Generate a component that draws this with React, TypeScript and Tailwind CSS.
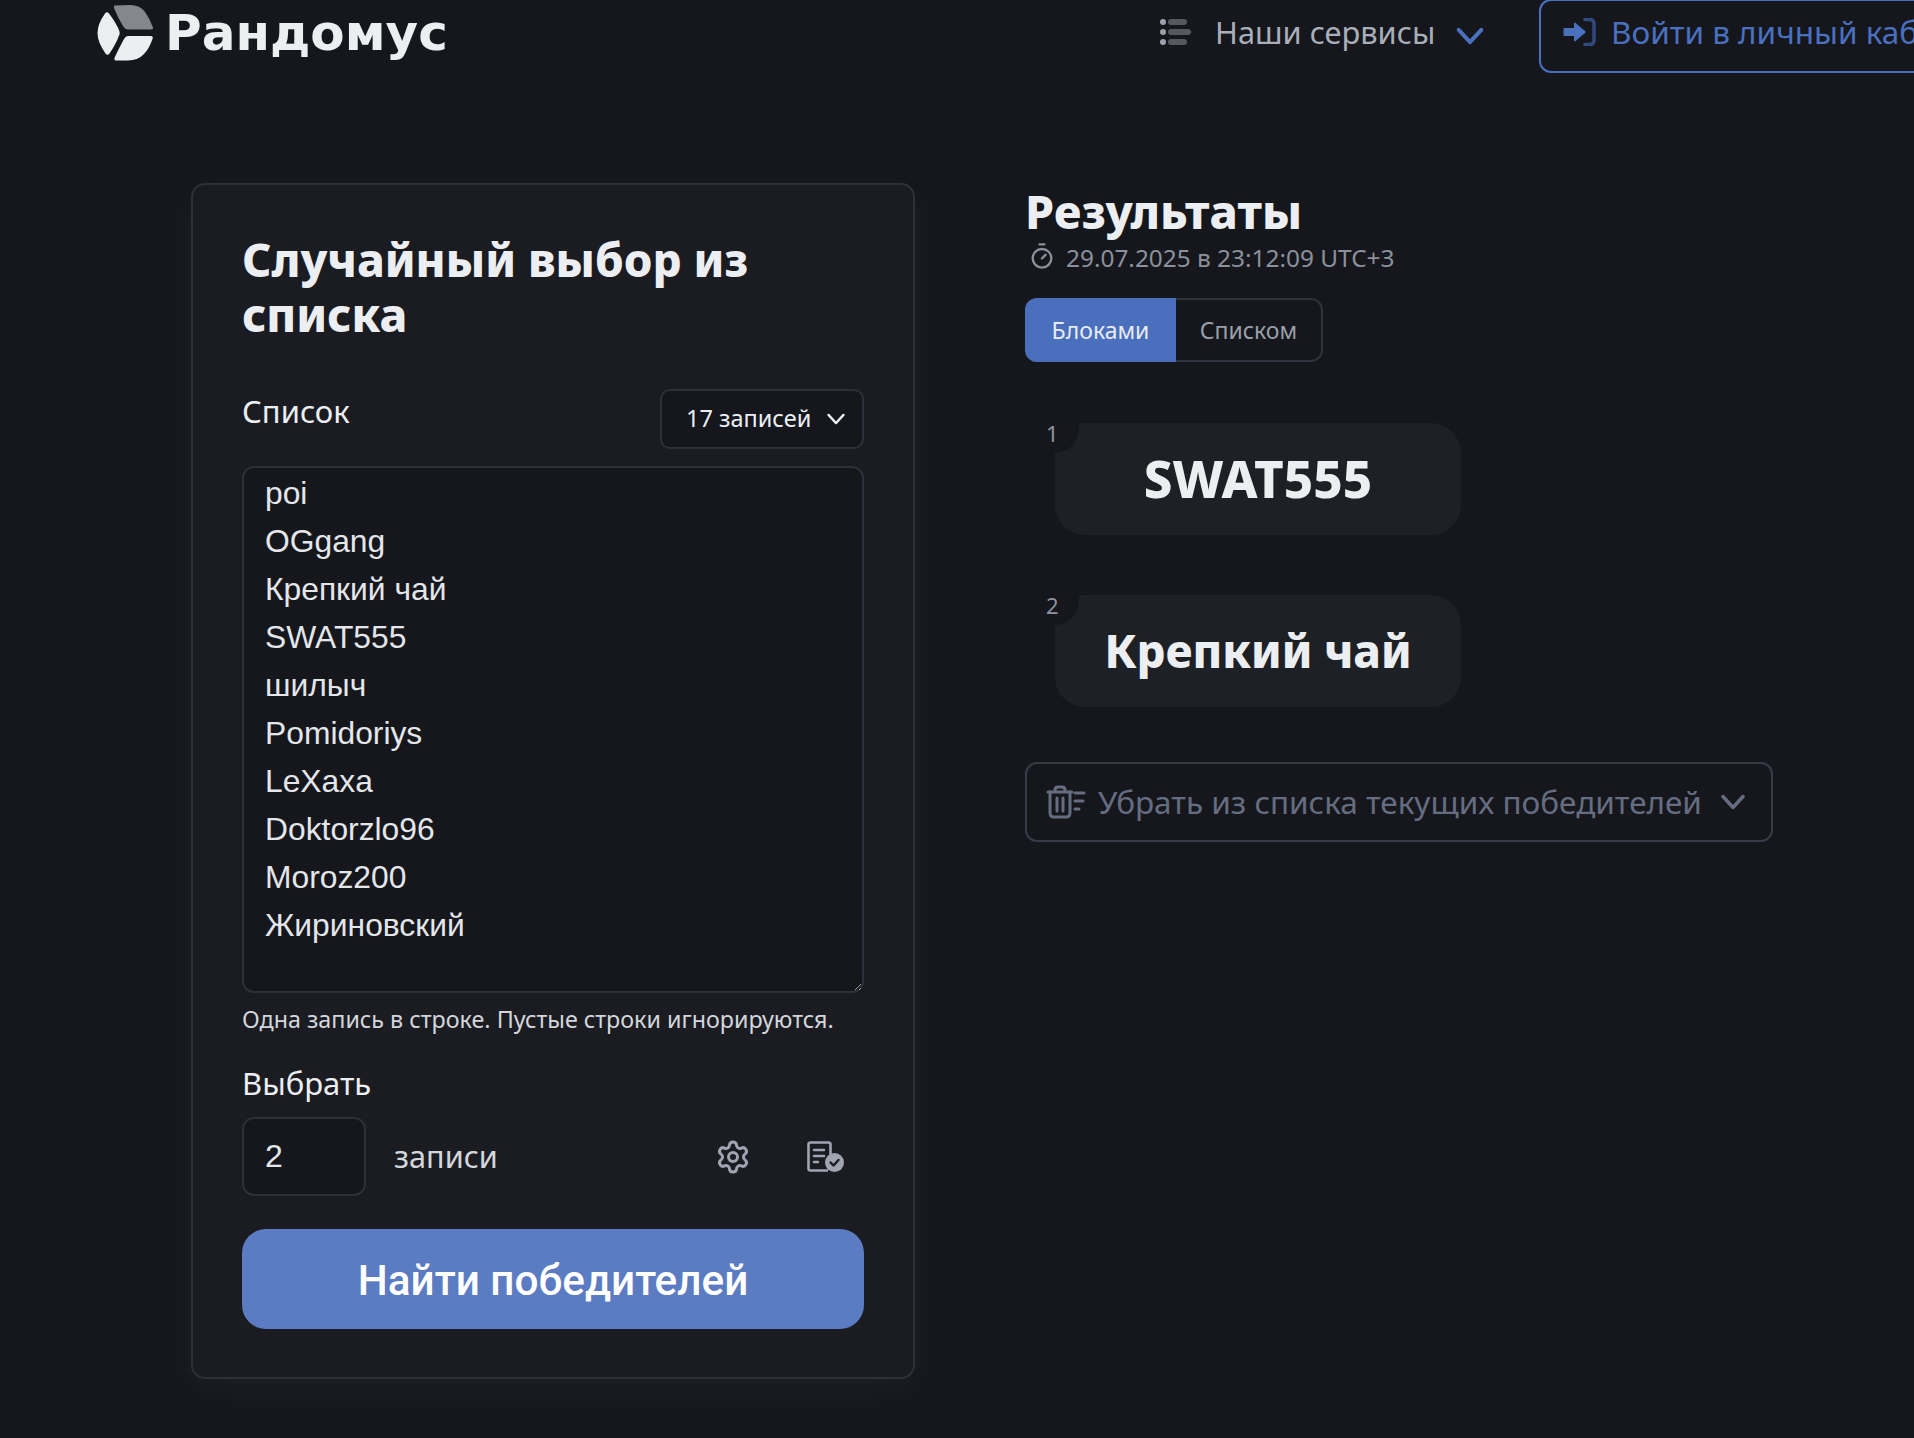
import { Settings, Timer } from "lucide-react";

const names = ["poi", "OGgang", "Крепкий чай", "SWAT555", "шилыч", "Pomidoriys", "LeXaxa", "Doktorzlo96", "Moroz200", "Жириновский"];

const results = [
  { n: 1, name: "SWAT555", size: "text-[51px]" },
  { n: 2, name: "Крепкий чай", size: "text-[45.5px]" },
];

function Logo() {
  return (
    <svg viewBox="7 5 56 56" className="w-14 h-14 shrink-0">
      <path fill="#eceef2" d="M15 13.5Q17 11 19 13.5Q27 24 29.5 31.5Q30 33.5 29 35.5Q26 44 19.5 53.5Q17.5 56 15.5 53.5Q7.5 42 7.5 33Q7.5 24 15 13.5Z" />
      <path fill="#85878c" d="M25 5.5L40 5Q50 5 55 12Q60 19 63 27.5Q63.5 29.5 61 29.5L38 29.5Q35 29.5 33 26Q28 18 24 8Q23.5 5.5 25 5.5Z" />
      <path fill="#eceef2" d="M38 36L61 36Q63.5 36 62.5 39Q59 49 54 54Q48 60.5 38 60.5L26 60.5Q24 60.5 24.5 58Q28 50 34 39Q35.5 36 38 36Z" />
    </svg>
  );
}

function ListIcon() {
  return (
    <svg viewBox="0 0 32 28" className="w-8 h-7 shrink-0">
      <circle cx="3" cy="4" r="3" fill="#9da1ad" />
      <circle cx="3" cy="14" r="3" fill="#9da1ad" />
      <circle cx="3" cy="24" r="3" fill="#9da1ad" />
      <rect x="8" y="1" width="19" height="6" rx="3" fill="#56585f" />
      <rect x="8" y="11" width="23" height="6" rx="3" fill="#56585f" />
      <rect x="8" y="21" width="19" height="6" rx="3" fill="#56585f" />
    </svg>
  );
}

function LoginIcon() {
  return (
    <svg viewBox="13 19 33 28" className="w-[33px] h-7 shrink-0">
      <path fill="#4a70c0" d="M14.5 29H24V24.5Q24 23 25.5 24L35 32Q36 33 35 34L25.5 42Q24 43 24 41.5V37H14.5Q13.5 37 13.5 36V30Q13.5 29 14.5 29Z" />
      <path fill="none" stroke="#2f4a80" strokeWidth="3.5" strokeLinecap="round" d="M35 20.5H39.5Q44 20.5 44 25V41Q44 45.5 39.5 45.5H35" />
    </svg>
  );
}

function Chevron({ className, strokeWidth = 3 }: { className: string; strokeWidth?: number }) {
  return (
    <svg viewBox="0 0 24 16" fill="none" stroke="currentColor" strokeWidth={strokeWidth} strokeLinecap="round" strokeLinejoin="round" className={className}>
      <path d="M2 2.5L12 13.5L22 2.5" />
    </svg>
  );
}

function DocCheck() {
  return (
    <svg viewBox="0 0 38 31" className="w-[38px] h-[31px]">
      <path fill="none" stroke="#a0a4b0" strokeWidth="2.6" d="M21 29.5H3.5Q1.5 29.5 1.5 27.5V3.5Q1.5 1.5 3.5 1.5H21.5Q23.5 1.5 23.5 3.5V14" />
      <path stroke="#a0a4b0" strokeWidth="2.6" strokeLinecap="round" d="M7 9H17M7 15H17M7 21H11" />
      <circle cx="27.5" cy="21.5" r="9.5" fill="#a0a4b0" />
      <path fill="none" stroke="#1a1c22" strokeWidth="2.4" strokeLinecap="round" strokeLinejoin="round" d="M23.5 21.5L26.5 24.5L31.5 19" />
    </svg>
  );
}

function TrashLines() {
  return (
    <svg viewBox="0 0 40 34" fill="none" stroke="#666d80" strokeWidth="3" strokeLinecap="round" strokeLinejoin="round" className="w-10 h-[34px] shrink-0">
      <path d="M2 7H26M9 7V5Q9 2 12 2H16Q19 2 19 5V7" />
      <path d="M4 7V28Q4 32 8 32H20Q24 32 24 28V7" />
      <path d="M11 13V26M17 13V26" />
      <path d="M29 8H38M29 16H37M29 24H33" />
    </svg>
  );
}

export default function App() {
  return (
    <div className="h-[1438px] overflow-hidden bg-[#15171c] font-['Noto_Sans',sans-serif] text-[#eceef2]">
      <header className="flex items-start h-[72px] pl-[97px]">
        <div className="flex items-center gap-[12px] pt-[5px] w-[1063px] shrink-0">
          <Logo />
          <span className="font-['DejaVu_Sans',sans-serif] text-[50px] leading-[56px] font-bold">Рандомус</span>
        </div>
        <div className="flex items-center h-[64px] w-[379px] shrink-0 text-[#a9aeb8] text-[30.8px]">
          <ListIcon />
          <span className="ml-[23px]">Наши сервисы</span>
          <Chevron className="w-7 h-[18px] ml-[21px] mt-[8px] text-[#4a70c0]" strokeWidth={3.5} />
        </div>
        <div className="flex items-center gap-[15px] w-[500px] shrink-0 h-[74px] -mt-px pl-[22px] pb-[8px] border-2 border-[#4a70c0] rounded-xl text-[#4a70c0] text-[31.5px]">
          <LoginIcon />
          <span className="whitespace-nowrap">Войти в личный кабинет</span>
        </div>
      </header>

      <main className="flex items-start pl-[191px] pt-[111px] gap-[110px]">
        <section className="w-[724px] h-[1196px] shrink-0 bg-[#1a1c22] border-2 border-[#2c303a] rounded-[14px] px-[49px] pt-[47px] shadow-[0_10px_40px_rgba(255,255,255,0.04)]">
          <h1 className="text-[45.8px] leading-[55px] font-extrabold">Случайный выбор из списка</h1>

          <div className="flex items-start justify-between mt-[47px]">
            <label className="text-[31px] leading-[38px] mt-[3px]">Список</label>
            <button className="flex items-center justify-between w-[204px] h-[60px] pl-6 pr-[17px] bg-[#15171c] border-2 border-[#2c303a] rounded-[10px] text-[23.5px]">
              17 записей
              <Chevron className="w-[18px] h-3 text-[#eceef2]" />
            </button>
          </div>

          <textarea
            readOnly
            defaultValue={names.join("\n")}
            className="block w-full h-[527px] mt-[17px] px-[21px] py-[1px] bg-[#15171c] border-2 border-[#2c303a] rounded-[12px] font-['Liberation_Sans',sans-serif] text-[31.8px] leading-[48px] text-[#e4e6ea] outline-none"
          />
          <p className="mt-[10px] text-[23.3px] leading-[32px] text-[#d4d6dc]">Одна запись в строке. Пустые строки игнорируются.</p>

          <label className="block mt-[29px] text-[31px] leading-[38px]">Выбрать</label>

          <div className="flex items-center mt-[15px]">
            <input
              readOnly
              defaultValue="2"
              className="w-[124px] h-[79px] px-[21px] bg-[#15171c] border-2 border-[#2c303a] rounded-[12px] font-['Liberation_Sans',sans-serif] text-[32px] text-[#e4e6ea] outline-none"
            />
            <span className="ml-7 text-[30.7px] text-[#d4d6dc]">записи</span>
            <div className="flex items-center gap-[56px] ml-auto mr-[19px]">
              <Settings className="w-9 h-9 text-[#a0a4b0]" strokeWidth={2} />
              <DocCheck />
            </div>
          </div>

          <button className="w-full h-[100px] mt-[33px] pt-[4px] bg-[#5b7bc2] rounded-[24px] font-['Roboto',sans-serif] text-[42.3px] font-medium text-white">
            Найти победителей
          </button>
        </section>

        <section className="w-[748px] shrink-0">
          <h2 className="text-[46.6px] leading-[56px] font-extrabold">Результаты</h2>
          <div className="flex items-center gap-[10px] ml-[3px] mt-[2px] text-[24.4px] leading-[34px] text-[#8b909b]">
            <Timer className="w-[28px] h-[28px] -mt-[4px]" strokeWidth={2} />
            <span>29.07.2025 в 23:12:09 UTC+3</span>
          </div>

          <div className="inline-flex h-16 mt-[23px] rounded-xl border-2 border-[#2e323c] text-[23px]">
            <button className="w-[151px] -m-[2px] mr-0 bg-[#4a70bd] rounded-l-xl text-[#e8ebf2]">Блоками</button>
            <button className="w-[145px] text-[#9a9fa9]">Списком</button>
          </div>

          <div className="mt-[61px] ml-[30px] flex flex-col gap-[60px]">
            {results.map((r) => (
              <div key={r.n} className={`relative flex items-center justify-center w-[406px] h-[112px] pb-[2px] bg-[#1d2025] rounded-[30px] font-extrabold ${r.size}`}>
                <span className="absolute -left-[16px] top-0 flex w-[40px] h-[32px] items-start justify-start pl-[7px] -mt-[2px] bg-[#15171c] rounded-br-[24px] text-[22px] leading-[24px] font-normal text-[#8e93a0]">
                  {r.n}
                </span>
                {r.name}
              </div>
            ))}
          </div>

          <button className="flex items-center w-[748px] h-[80px] mt-[55px] pl-[19px] pr-[26px] border-2 border-[#383c48] rounded-[12px] text-[31.5px] text-[#666d80]">
            <TrashLines />
            <span className="ml-[12px] whitespace-nowrap">Убрать из списка текущих победителей</span>
            <Chevron className="w-6 h-4 ml-auto text-[#666d80]" strokeWidth={3.5} />
          </button>
        </section>
      </main>
    </div>
  );
}
